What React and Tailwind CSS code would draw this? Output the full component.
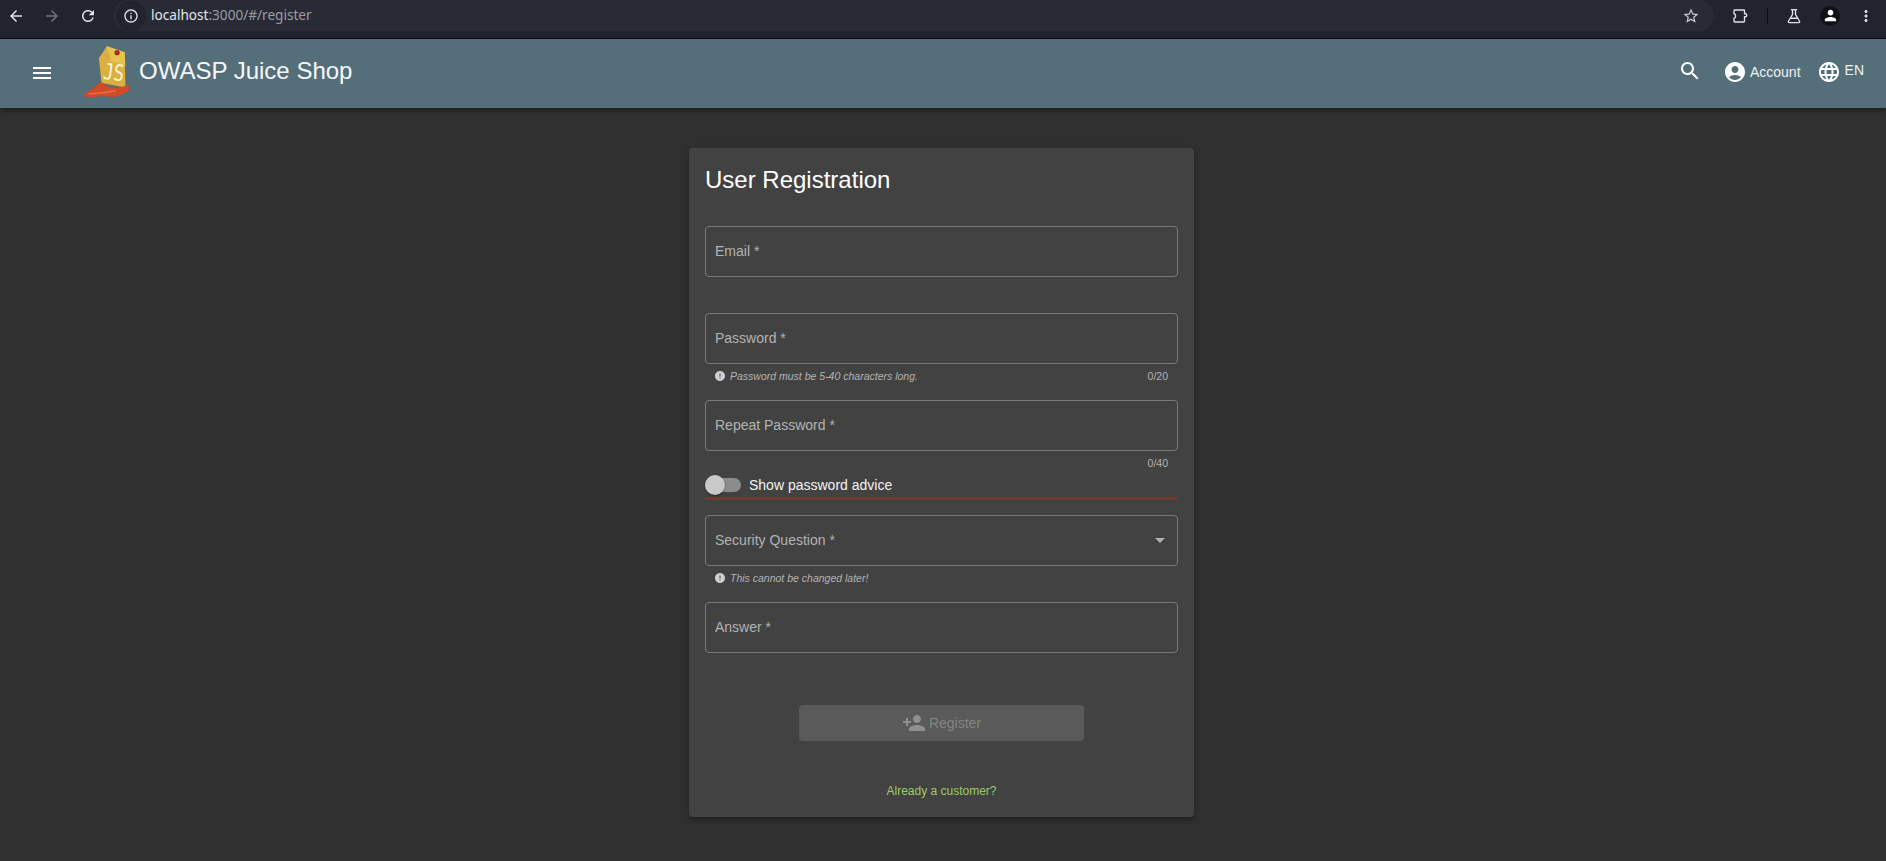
const P = {
  menu: "M3 18h18v-2H3v2zm0-5h18v-2H3v2zm0-7v2h18V6H3z",
  search: "M15.5 14h-.79l-.28-.27C15.41 12.59 16 11.11 16 9.5 16 5.91 13.09 3 9.5 3S3 5.91 3 9.5 5.91 16 9.5 16c1.61 0 3.09-.59 4.23-1.57l.27.28v.79l5 4.99L20.49 19l-4.99-5zm-6 0C7.01 14 5 11.99 5 9.5S7.01 5 9.5 5 14 7.01 14 9.5 11.99 14 9.5 14z",
  account: "M12 2C6.48 2 2 6.48 2 12s4.48 10 10 10 10-4.48 10-10S17.52 2 12 2zm0 4c1.93 0 3.5 1.57 3.5 3.5S13.93 13 12 13s-3.5-1.57-3.5-3.5S10.07 6 12 6zm0 14c-2.03 0-4.43-.82-6.14-2.88C7.55 15.8 9.68 15 12 15s4.45.8 6.14 2.12C16.43 19.18 14.03 20 12 20z",
  language: "M11.99 2C6.47 2 2 6.48 2 12s4.47 10 9.99 10C17.52 22 22 17.52 22 12S17.52 2 11.99 2zm6.93 6h-2.95c-.32-1.25-.78-2.45-1.38-3.56 1.84.63 3.37 1.91 4.33 3.56zM12 4.04c.83 1.2 1.48 2.53 1.91 3.96h-3.82c.43-1.43 1.08-2.76 1.91-3.96zM4.26 14C4.1 13.36 4 12.69 4 12s.1-1.36.26-2h3.38c-.08.66-.14 1.32-.14 2 0 .68.06 1.34.14 2H4.26zm.82 2h2.95c.32 1.25.78 2.45 1.38 3.56-1.84-.63-3.37-1.9-4.33-3.56zm2.95-8H5.08c.96-1.66 2.49-2.93 4.33-3.56C8.81 5.55 8.35 6.75 8.03 8zM12 19.96c-.83-1.2-1.48-2.53-1.91-3.96h3.82c-.43 1.43-1.08 2.76-1.91 3.96zM14.34 14H9.66c-.09-.66-.16-1.32-.16-2 0-.68.07-1.35.16-2h4.68c.09.65.16 1.32.16 2 0 .68-.07 1.34-.16 2zm.25 5.56c.6-1.11 1.06-2.31 1.38-3.56h2.95c-.96 1.65-2.49 2.93-4.33 3.56zM16.36 14c.08-.66.14-1.32.14-2 0-.68-.06-1.34-.14-2h3.38c.16.64.26 1.31.26 2s-.1 1.36-.26 2h-3.38z",
  personAdd: "M15 12c2.21 0 4-1.79 4-4s-1.79-4-4-4-4 1.79-4 4 1.79 4 4 4zm-9-2V7H4v3H1v2h3v3h2v-3h3v-2H6zm9 4c-2.67 0-8 1.34-8 4v2h16v-2c0-2.66-5.33-4-8-4z",
  error: "M12 2C6.48 2 2 6.48 2 12s4.48 10 10 10 10-4.48 10-10S17.52 2 12 2zm1 15h-2v-2h2v2zm0-4h-2V7h2v6z",
  back: "M20 11H7.83l5.59-5.59L12 4l-8 8 8 8 1.41-1.41L7.83 13H20v-2z",
  forward: "M12 4l-1.41 1.41L16.17 11H4v2h12.17l-5.58 5.59L12 20l8-8z",
  refresh: "M17.65 6.35C16.2 4.9 14.21 4 12 4c-4.42 0-7.99 3.58-7.99 8s3.57 8 7.99 8c3.73 0 6.84-2.55 7.73-6h-2.08c-.82 2.33-3.04 4-5.65 4-3.31 0-6-2.69-6-6s2.69-6 6-6c1.66 0 3.14.69 4.22 1.78L13 11h7V4l-2.35 2.35z",
  info: "M11 7h2v2h-2zm0 4h2v6h-2zm1-9C6.48 2 2 6.48 2 12s4.48 10 10 10 10-4.48 10-10S17.52 2 12 2zm0 18c-4.41 0-8-3.59-8-8s3.59-8 8-8 8 3.59 8 8-3.59 8-8 8z",
  star: "M22 9.24l-7.19-.62L12 2 9.19 8.63 2 9.24l5.46 4.73L5.82 21 12 17.27 18.18 21l-1.63-7.03L22 9.24zM12 15.4l-3.76 2.27 1-4.28-3.32-2.88 4.38-.38L12 6.1l1.71 4.04 4.38.38-3.32 2.88 1 4.28L12 15.4z",
  person: "M12 12c2.21 0 4-1.79 4-4s-1.79-4-4-4-4 1.79-4 4 1.79 4 4 4zm0 2c-2.67 0-8 1.34-8 4v2h16v-2c0-2.66-5.33-4-8-4z",
  dots: "M12 8c1.1 0 2-.9 2-2s-.9-2-2-2-2 .9-2 2 .9 2 2 2zm0 2c-1.1 0-2 .9-2 2s.9 2 2 2 2-.9 2-2-.9-2-2-2zm0 6c-1.1 0-2 .9-2 2s.9 2 2 2 2-.9 2-2-.9-2-2-2z",
};

function Icon({ d, className }) {
  return (
    <svg viewBox="0 0 24 24" fill="currentColor" className={className}>
      <path d={d} />
    </svg>
  );
}

function Stroke({ d, className }) {
  return (
    <svg viewBox="0 0 24 24" fill="none" stroke="currentColor" strokeWidth="1.8" strokeLinejoin="round" strokeLinecap="round" className={className}>
      <path d={d} />
    </svg>
  );
}

function Logo() {
  return (
    <svg viewBox="250 135 142 157" className="w-[47px] h-[52px] shrink-0">
      <path d="M298 172 L322 136 L376 154 L378 260 L306 247 Z" fill="#dcb040" />
      <path d="M322 136 L376 154 L378 195 L335 180 Z" fill="#e8c24e" />
      <path d="M252 283 C266 268 286 264 298 246 C306 240 314 250 326 258 C346 263 366 262 386 252 C393 260 392 268 382 274 C366 282 352 292 330 288 C306 284 280 292 256 288 Z" fill="#d24a28" />
      <path d="M268 280 C290 276 320 278 350 270" fill="none" stroke="#e8734a" strokeWidth="4" />
      <circle cx="353" cy="155" r="8" fill="#a62c18" />
      <text fontSize="52" fill="#fff6d8" fontFamily="'DejaVu Sans Mono', monospace" transform="translate(309 234) rotate(7) scale(1 1.3)">JS</text>
    </svg>
  );
}

function Field({ label, children, chevron, h = "h-[36px]" }) {
  return (
    <div className="flex flex-col">
      <div className="h-[51px] rounded-[4px] border border-[#7a7a7a] pl-[9px] pr-[12px] flex items-center justify-between">
        <span className="text-[14px] text-[#b3b3b3]">{label}</span>
        {chevron && <span className="w-0 h-0 border-l-[5px] border-r-[5px] border-t-[5px] border-l-transparent border-r-transparent border-t-[#b3b3b3]" />}
      </div>
      <div className={`${h} pl-[9px] pr-[10px] pt-[5px] flex justify-between items-start text-[10.5px] leading-[14px] text-[#b3b3b3]`}>
        {children}
      </div>
    </div>
  );
}

function Hint({ children }) {
  return (
    <span className="flex items-center">
      <Icon d={P.error} className="w-[12px] h-[12px] mr-[4px] text-[#cfcfcf]" />
      <i>{children}</i>
    </span>
  );
}

export default function App() {
  return (
    <div className="h-screen overflow-hidden flex flex-col bg-[#303030] text-white font-['Liberation_Sans',Arial,sans-serif]">
      {/* browser chrome */}
      <div className="h-[39px] shrink-0 bg-[#21242e] border-b border-[#0b0c10] flex items-start pl-[4px] text-[#dfe1e6]">
        <div className="flex items-center h-[31px]">
          <Icon d={P.back} className="w-[18px] h-[18px] ml-[3px]" />
          <Icon d={P.forward} className="w-[18px] h-[18px] ml-[18px] text-[#6f727a]" />
          <Icon d={P.refresh} className="w-[18px] h-[18px] ml-[18px]" />
        </div>
        <div className="ml-[16px] w-[1601px] shrink-0 h-[31px] rounded-full bg-[#282b36] flex items-center">
          <span className="w-[30px] h-[30px] rounded-full bg-[#21242e] flex items-center justify-center ml-[3px]">
            <Icon d={P.info} className="w-[16px] h-[16px]" />
          </span>
          <span className="ml-[5px] text-[13.6px] font-['Noto_Sans',sans-serif] text-[#e3e5ea]">
            localhost<span className="text-[#9a9ca4]">:3000/#/register</span>
          </span>
          <Icon d={P.star} className="w-[18px] h-[18px] ml-auto mr-[14px] text-[#c9cbd1]" />
        </div>
        <div className="flex items-center h-[31px]">
          <Stroke d="M5 4H17a1 1 0 0 1 1 1V9h1a2 2 0 0 1 0 4h-1V19a1 1 0 0 1-1 1H5a1 1 0 0 1-1-1V15a2.5 2.5 0 0 0 2-3a2.5 2.5 0 0 0-2-3V5a1 1 0 0 1 1-1z" className="w-[18px] h-[18px] ml-[17px]" />
          <span className="w-[1px] h-[16px] bg-[#0b0c10] ml-[18px]" />
          <Stroke d="M8.5 3.5h7M10 3.5V10L4.6 19c-.5.9.1 1.8 1 1.8h12.8c.9 0 1.5-.9 1-1.8L14 10V3.5M7.5 15h9" className="w-[18px] h-[18px] ml-[17px]" />
          <span className="w-[20px] h-[20px] rounded-full bg-[#101116] flex items-center justify-center ml-[17px]">
            <Icon d={P.person} className="w-[17px] h-[17px] text-white" />
          </span>
          <Icon d={P.dots} className="w-[18px] h-[18px] ml-[17px]" />
        </div>
      </div>

      {/* app toolbar */}
      <header className="h-[69px] shrink-0 bg-[#546e7a] flex items-center pl-[30px] pr-[22px] pb-[4px] shadow-[0_2px_4px_-1px_rgba(0,0,0,0.3),0_4px_5px_0_rgba(0,0,0,0.2)] relative">
        <Icon d={P.menu} className="w-[24px] h-[24px] mt-[2px]" />
        <div className="ml-[29px]"><Logo /></div>
        <span className="ml-[9px] text-[24px] leading-[28px] text-[#f5f7f8] -mt-[2px]">OWASP Juice Shop</span>
        <div className="ml-auto flex items-center">
          <Icon d={P.search} className="w-[24px] h-[24px] -mt-[2px] mr-[-1px]" />
          <Icon d={P.account} className="w-[24px] h-[24px] ml-[22px]" />
          <span className="ml-[3px] text-[14px] text-[#eef1f2] mt-[2px]">Account</span>
          <Icon d={P.language} className="w-[24px] h-[24px] ml-[16px]" />
          <span className="ml-[4px] text-[14px] text-[#eef1f2] -mt-[2px]">EN</span>
        </div>
      </header>

      {/* page */}
      <main className="flex-1 flex justify-center items-start pt-[40px] pr-[3px]">
        <div className="w-[505px] h-[669px] bg-[#424242] rounded-[4px] px-[16px] shadow-[0_3px_3px_-2px_rgba(0,0,0,0.2),0_3px_4px_0_rgba(0,0,0,0.14),0_1px_8px_0_rgba(0,0,0,0.12)] flex flex-col">
          <h1 className="mt-[16px] h-[62px] text-[24px] leading-[32px] text-white">User Registration</h1>

          <Field label="Email *" />
          <Field label="Password *">
            <Hint>Password must be 5-40 characters long.</Hint>
            <span>0/20</span>
          </Field>
          <Field label="Repeat Password *" h="h-[22px]">
            <span />
            <span>0/40</span>
          </Field>

          <div className="h-[24px] flex items-center">
            <span className="relative w-[36px] h-[14px] rounded-full bg-[#8c8c8c] shrink-0">
              <span className="absolute left-0 -top-[3px] w-[20px] h-[20px] rounded-full bg-[#c9c9c9] shadow-[0_1px_2px_rgba(0,0,0,0.4)]" />
            </span>
            <span className="ml-[8px] text-[14px] text-[#f2f2f2]">Show password advice</span>
          </div>
          <div className="h-[3px] bg-[#6f3c2c] mb-[15px]" />

          <Field label="Security Question *" chevron>
            <Hint>This cannot be changed later!</Hint>
          </Field>
          <Field label="Answer *" h="h-[52px]" />

          <button className="self-center w-[285px] h-[36px] rounded-[4px] bg-[#5a5a5a] flex items-center justify-center text-[14px] text-[#858585]">
            <Icon d={P.personAdd} className="w-[24px] h-[24px] mr-[3px] text-[#909090]" />
            Register
          </button>

          <a className="mt-[42px] self-center text-[12px] leading-[16px] text-[#9ccc65]">Already a customer?</a>
        </div>
      </main>
    </div>
  );
}
